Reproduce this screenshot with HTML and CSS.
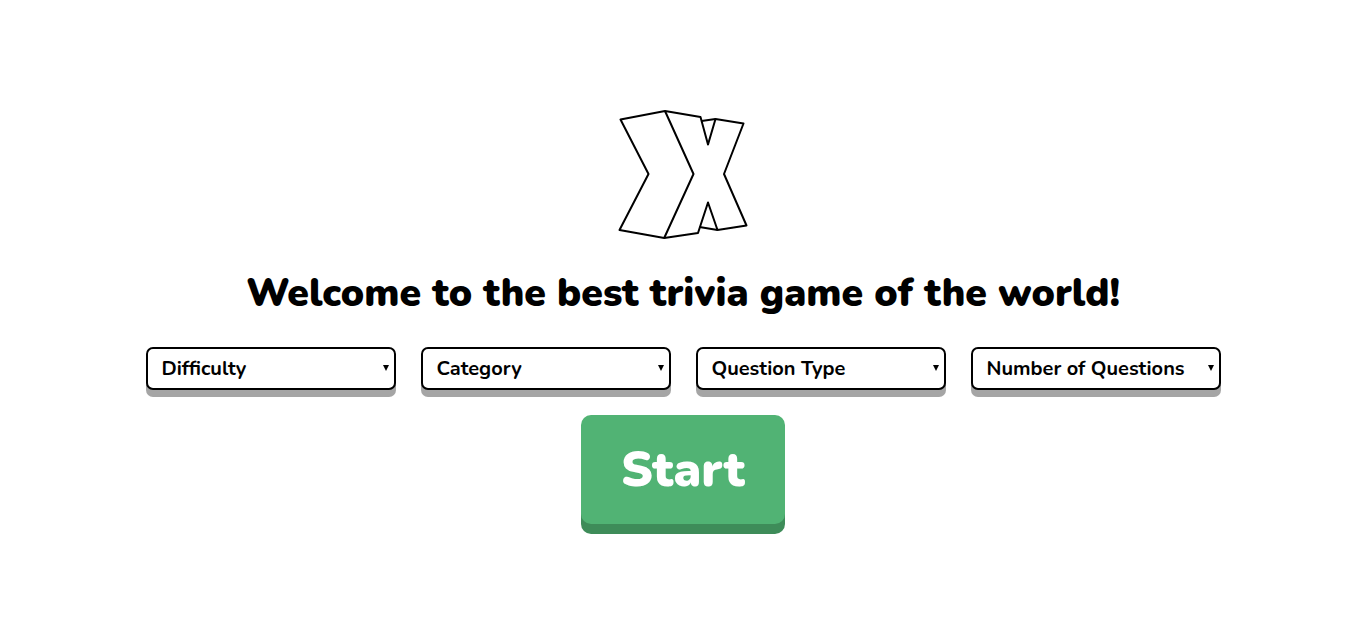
FILE: index.html
```html
<!DOCTYPE html>
<html lang="en">
<head>
<meta charset="utf-8">
<meta name="viewport" content="width=device-width, initial-scale=1">
<title>Trivia</title>
<link rel="stylesheet" href="styles.css">
</head>
<body>
<main class="welcome">
  <svg class="logo" viewBox="-1 0 130 130" role="img" aria-label="Logo">
    <path d="M46 1 1.500 9.500 29.500 64 .5 120 45.200 128 79 123 89 92.500 98.500 120 127.500 115.500 105 64 124.500 13.500 96.500 9 89 34.500 81.500 7Z"/>
    <path d="M46 1 74.500 64 45.200 128M82.500 11 96.500 9M80.500 117 98.500 120"/>
  </svg>
  <h1 class="title">Welcome to the best trivia game of the world!</h1>
  <form class="setup">
    <div class="options">
      <div class="field"><select class="select" aria-label="Difficulty"><option>Difficulty</option></select></div>
      <div class="field"><select class="select" aria-label="Category"><option>Category</option></select></div>
      <div class="field"><select class="select" aria-label="Question Type"><option>Question Type</option></select></div>
      <div class="field"><select class="select" aria-label="Number of Questions"><option>Number of Questions</option></select></div>
    </div>
    <button class="start" type="button">Start</button>
  </form>
</main>
</body>
</html>
```
FILE: styles.css
```css
* { box-sizing: border-box; }

body {
  margin: 0;
  background: #fff;
  color: #000;
  font-family: Nunito, "Open Sans", sans-serif;
}

.welcome {
  min-height: 100vh;
  display: flex;
  flex-direction: column;
  align-items: center;
  justify-content: center;
}

.logo {
  width: 130px;
  height: 130px;
  fill: #fff;
  stroke: #000;
  stroke-width: 2;
  stroke-linejoin: round;
  overflow: visible;
}

.title {
  margin: 26px 0;
  font-size: 39px;
  font-weight: 900;
  line-height: 55px;
  text-align: center;
}

.setup {
  display: flex;
  flex-direction: column;
  align-items: center;
  gap: 25px;
}

.options {
  display: flex;
  flex-wrap: wrap;
  justify-content: center;
  gap: 25px;
}

.field {
  position: relative;
  width: 250px;
}

.field::after {
  content: "";
  position: absolute;
  top: 18px;
  right: 7px;
  border: 3px solid transparent;
  border-top: 6px solid #000;
  border-bottom: 0;
  pointer-events: none;
}

.select {
  display: block;
  width: 100%;
  height: 43px;
  padding: 0 14px;
  appearance: none;
  border: 2px solid #000;
  border-radius: 7px;
  background: #fff;
  box-shadow: 0 7px #a5a5a5;
  color: #000;
  font: 700 20px Nunito, Lato, sans-serif;
}

.start {
  padding: 22px 40px;
  border: 0;
  border-radius: 10px;
  background: #51b374;
  box-shadow: 0 10px #3e8c59;
  color: #fff;
  font: 900 49px/65px Nunito, "Open Sans", sans-serif;
}
```
